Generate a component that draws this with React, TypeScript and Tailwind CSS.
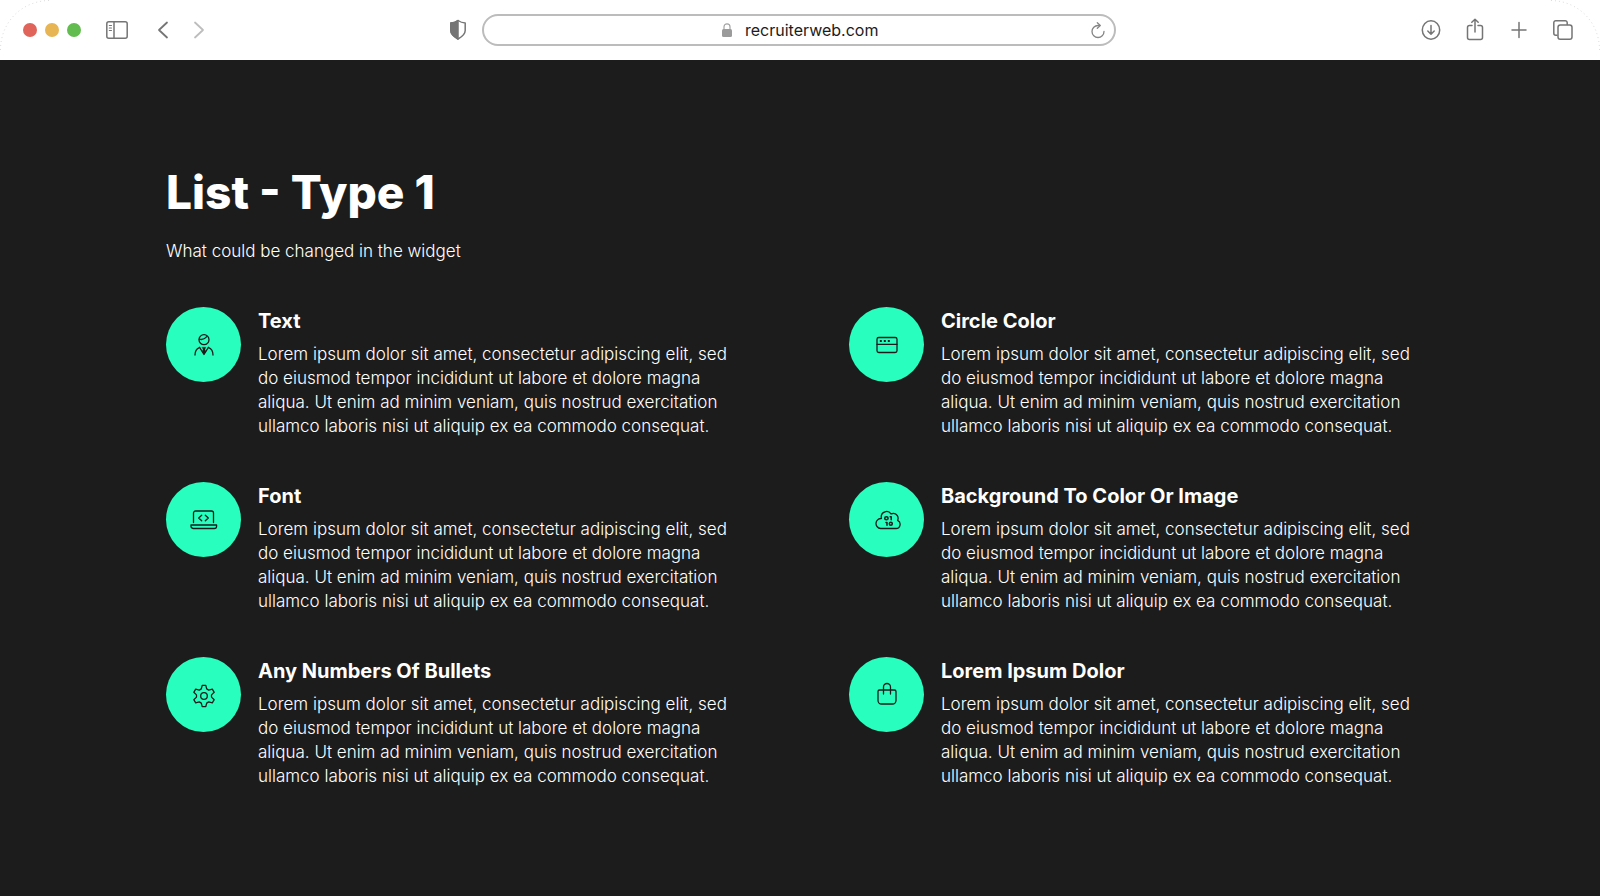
import React from 'react';

const LOREM =
  'Lorem ipsum dolor sit amet, consectetur adipiscing elit, sed do eiusmod tempor incididunt ut labore et dolore magna aliqua. Ut enim ad minim veniam, quis nostrud exercitation ullamco laboris nisi ut aliquip ex ea commodo consequat.';

interface IconProps {
  children: React.ReactNode;
}

// 28x28 line icon used inside the circles
function ItemIcon({ children }: IconProps) {
  return (
    <svg
      width="28"
      height="28"
      viewBox="0 0 28 28"
      fill="none"
      stroke="#1c1c1c"
      strokeWidth="1.3"
      strokeLinecap="round"
      strokeLinejoin="round"
      aria-hidden="true"
    >
      {children}
    </svg>
  );
}

// 24x24 line icon used in the browser bar
function BarIcon({ children }: IconProps) {
  return (
    <svg
      width="24"
      height="24"
      viewBox="0 0 24 24"
      fill="none"
      stroke="#757575"
      strokeWidth="1.5"
      strokeLinecap="round"
      strokeLinejoin="round"
      aria-hidden="true"
    >
      {children}
    </svg>
  );
}

const items = [
  {
    title: 'Text',
    icon: (
      <ItemIcon>
        <circle cx="14" cy="8.7" r="5" />
        <path d="M9.3 8.2c3 .8 5.5-.1 7.4-2.5" />
        <path d="M5 24c0-3.6 1.3-6.1 4.3-7.4M23 24c0-3.6-1.3-6.1-4.3-7.4" />
        <path d="M9.6 16.3 14 23.5l4.400-7.2" />
        <path d="M12.3 16.3h3.400l-.8 2.200.9 2-1.800 2.700-1.800-2.700.9-2z" fill="#1c1c1c" strokeWidth=".4" />
      </ItemIcon>
    ),
  },
  {
    title: 'Circle Color',
    icon: (
      <ItemIcon>
        <rect x="4" y="6.5" width="20" height="15" rx="1.8" />
        <path d="M4 13.3h20" />
        <g fill="#1c1c1c" stroke="none">
          <rect x="6.8" y="9" width="2" height="2" rx=".5" />
          <rect x="10.8" y="9" width="2" height="2" rx=".5" />
          <rect x="14.8" y="9" width="2" height="2" rx=".5" />
        </g>
      </ItemIcon>
    ),
  },
  {
    title: 'Font',
    icon: (
      <ItemIcon>
        <path d="M3.5 16.5V7a2 2 0 0 1 2-2h16a2 2 0 0 1 2 2v9.5" />
        <path d="M1 19h25.600v1.200a2.300 2.300 0 0 1-2.300 2.300h-21a2.300 2.300 0 0 1-2.300-2.300z" />
        <path d="m11.700 9.300-3 2.700 3 2.700M15.300 9.300l3 2.700-3 2.700" />
      </ItemIcon>
    ),
  },
  {
    title: 'Background To Color Or Image',
    icon: (
      <ItemIcon>
        <path d="M7.600 22.500h15.400a4.300 4.300 0 0 0 1.600-8.200 4.800 4.800 0 0 0-4.900-6.800c-.6 0-1.100.1-1.700.3a5.400 5.400 0 0 0-9.800 3.200c0 .5 0 1 .2 1.500a5 5 0 0 0-.8 10z" />
        <ellipse cx="13.400" cy="12.300" rx="1.700" ry="1.500" strokeWidth="1.500" />
        <path d="M17.200 10.800h1v3" strokeWidth="1.500" />
        <path d="M13 16.400h1v2.900" strokeWidth="1.500" />
        <ellipse cx="17.800" cy="17.800" rx="1.500" ry="1.500" strokeWidth="1.500" />
      </ItemIcon>
    ),
  },
  {
    title: 'Any Numbers Of Bullets',
    icon: (
      <ItemIcon>
        <circle cx="14" cy="15" r="3.3" />
        <path d="M12.200 4.300h3.600l.9 3.600 2 1.200 3.600-1 1.900 3.200-2.700 2.600v2.200l2.700 2.600-1.900 3.200-3.600-1-2 1.200-.9 3.600h-3.600l-.9-3.600-2-1.200-3.600 1-1.900-3.200 2.700-2.600v-2.200l-2.700-2.600 1.900-3.200 3.600 1 2-1.200z" />
      </ItemIcon>
    ),
  },
  {
    title: 'Lorem Ipsum Dolor',
    icon: (
      <ItemIcon>
        <path d="M6.500 9h15a1.500 1.500 0 0 1 1.500 1.500v9a3.500 3.500 0 0 1-3.500 3.500h-11a3.500 3.500 0 0 1-3.500-3.500v-9a1.500 1.500 0 0 1 1.500-1.500z" />
        <path d="M10.500 13V6a3.500 3.500 0 0 1 7 0v7" />
      </ItemIcon>
    ),
  },
];

function BrowserBar() {
  return (
    <header className="relative flex h-[60px] items-center bg-white">
      <svg className="absolute left-0 top-0" width="50" height="50" fill="none" aria-hidden="true">
        <path d="M.5 50C.5 22 22 .5 50 .5" stroke="#dcdcdc" strokeDasharray="1 3" />
      </svg>
      <svg className="absolute right-0 top-0" width="50" height="50" fill="none" aria-hidden="true">
        <path d="M49.500 50C49.500 22 28 .5 0 .5" stroke="#dcdcdc" strokeDasharray="1 3" />
      </svg>

      {/* Window controls and navigation */}
      <div className="flex flex-1 items-center pl-[23px]">
        <div className="flex gap-2">
          <button aria-label="Close" className="size-3.5 rounded-full bg-[#e0645a]" />
          <button aria-label="Minimize" className="size-3.5 rounded-full bg-[#e7b553]" />
          <button aria-label="Maximize" className="size-3.5 rounded-full bg-[#62bc50]" />
        </div>
        <button aria-label="Sidebar" className="ml-6">
          <BarIcon>
            <rect x="1.8" y="3.7" width="20.4" height="16.6" rx="2" />
            <path d="M9 4v16" />
            <path d="M4.3 7.5h2.2M4.3 10h2.2M4.3 12.5h2.2" strokeWidth="1.1" />
          </BarIcon>
        </button>
        <button aria-label="Back" className="ml-[22px]">
          <BarIcon>
            <path d="m16 4.500-8 7.500 8 7.500" strokeWidth="1.800" />
          </BarIcon>
        </button>
        <button aria-label="Forward" className="ml-3">
          <BarIcon>
            <path d="m8 4.500 8 7.500-8 7.500" stroke="#bdbdbd" strokeWidth="1.800" />
          </BarIcon>
        </button>
        <button aria-label="Privacy report" className="ml-auto mr-3">
          <BarIcon>
            <path d="M12 2.500c2.200 1.500 4.500 2.300 7.200 2.500v7.500c0 3.800-3.200 6.200-7.200 8.500-4-2.300-7.200-4.700-7.200-8.500V5c2.700-.2 5-1 7.200-2.500z" />
            <path d="M12 2.500V21c-4-2.300-7.200-4.700-7.200-8.500V5c2.700-.2 5-1 7.200-2.500z" fill="#757575" />
          </BarIcon>
        </button>
      </div>

      {/* Address field */}
      <div className="flex h-8 w-2/5 max-w-[634px] items-center rounded-full border-2 border-[#bcbcbc] px-2">
        <label htmlFor="address" className="ml-auto pl-1">
          <svg width="12" height="16" viewBox="0 0 12 16" fill="none" aria-label="Secure address">
            <path d="M3 8V4.800a3 3 0 0 1 6 0V8" stroke="#a3a3a3" strokeWidth="1.200" />
            <rect x="1" y="7" width="10" height="8" rx="1.500" fill="#9b9b9b" />
          </svg>
        </label>
        <input
          id="address"
          type="text"
          defaultValue="recruiterweb.com"
          className="ml-3 mr-auto w-[140px] bg-transparent font-['Inter',sans-serif] text-base leading-6 text-[#1c1c1c] outline-none"
        />
        <button aria-label="Reload" className="-ml-5">
          <svg
            width="16"
            height="18"
            viewBox="0 0 16 18"
            fill="none"
            stroke="#858585"
            strokeWidth="1.300"
            strokeLinecap="round"
            strokeLinejoin="round"
            aria-hidden="true"
          >
            <path d="M9.500 4.500H8A6 6 0 1 0 14 10.500" />
            <path d="m7.300 1.800 3 2.700-3 2.800" />
          </svg>
        </button>
      </div>

      {/* Page actions */}
      <div className="flex flex-1 items-center justify-end gap-5 pr-[25px]">
        <button aria-label="Downloads">
          <BarIcon>
            <ellipse cx="12" cy="12" rx="8.700" ry="9.300" />
            <path d="M12 7.500v8.500M8.800 13l3.200 3.200 3.200-3.200" />
          </BarIcon>
        </button>
        <button aria-label="Share">
          <BarIcon>
            <path d="M9 7.500H6.500a2 2 0 0 0-2 2V19.500a2 2 0 0 0 2 2h11a2 2 0 0 0 2-2V9.500a2 2 0 0 0-2-2H15" />
            <path d="M12 14V1.500M8.800 4.200 12 1.200l3.200 3" />
          </BarIcon>
        </button>
        <button aria-label="New tab">
          <BarIcon>
            <path d="M12 4.500v15M5 12h14" />
          </BarIcon>
        </button>
        <button aria-label="Tab overview">
          <BarIcon>
            <path d="M6 17.200H4.800a2 2 0 0 1-2-2V4.700a2 2 0 0 1 2-2h9.400a2 2 0 0 1 2 2V6.500" />
            <rect x="7" y="7" width="14" height="14.300" rx="2.300" />
          </BarIcon>
        </button>
      </div>
    </header>
  );
}

export default function App() {
  return (
    <div className="flex min-h-screen flex-col bg-[#1c1c1c] font-['Inter',sans-serif] text-white">
      <BrowserBar />

      <main className="mx-auto w-full max-w-[1316px] px-6 pt-[102px] pb-16">
        <h1 className="text-[46px] leading-[60px] font-extrabold">List - Type 1</h1>
        <p className="mt-[17px] text-[17px] leading-6 font-light">What could be changed in the widget</p>

        <ul className="mt-11 grid grid-cols-2 gap-x-[98px] gap-y-11">
          {items.map((item) => (
            <li key={item.title} className="flex items-start gap-[17px]">
              <div className="flex size-[75px] shrink-0 items-center justify-center rounded-full bg-[#28ffbf]">
                {item.icon}
              </div>
              <div>
                <h2 className="text-xl leading-7 font-bold">{item.title}</h2>
                <p className="mt-[7px] max-w-[480px] text-[17px] leading-6 font-light">{LOREM}</p>
              </div>
            </li>
          ))}
        </ul>
      </main>
    </div>
  );
}
